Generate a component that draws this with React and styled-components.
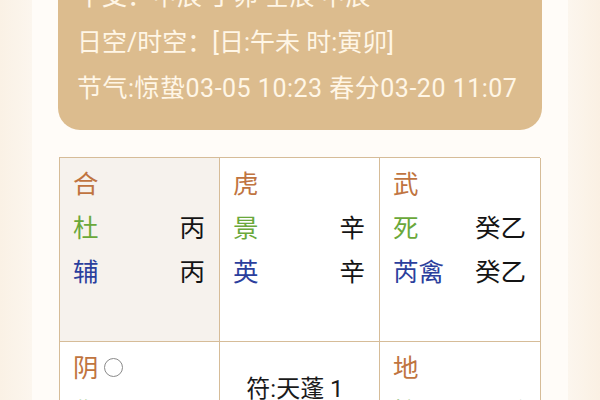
import React from 'react'
import styled, { createGlobalStyle } from 'styled-components'

const GlobalStyle = createGlobalStyle`
  html, body {
    margin: 0;
    padding: 0;
    background: #fbf3e9;
    font-family: Roboto, "Noto Sans CJK SC", sans-serif;
    overflow: hidden;
  }
`

const Page = styled.div`
  width: 600px;
  height: 400px;
  display: flex;
  justify-content: center;
  background: linear-gradient(90deg, #faf1e5 0%, #fcf6ee 32px, #fcf6ee 568px, #faf0e3 100%);
`

const Column = styled.div`
  width: 536px;
  height: 400px;
  overflow: hidden;
  background: #fffcf8;
  display: flex;
  flex-direction: column;
  gap: 27px;
`

const InfoCard = styled.div`
  margin: -40px 26px 0 26px;
  padding: 14px 19px 18px 19px;
  background: #dcbc8e;
  border-radius: 0 0 22px 22px;
  color: #fff6e6;
  font-size: 25px;
  line-height: 46px;
  flex-shrink: 0;
`

const InfoLine = styled.div`
  white-space: nowrap;
  letter-spacing: ${(p) => (p.$wide ? '0.5px' : '0')};
`

const Board = styled.div`
  margin: 0 28px 0 27px;
  display: grid;
  grid-template-columns: 160px 160px 161px;
  grid-auto-rows: 184px;
  border-top: 1px solid #d6bc98;
  border-left: 1px solid #d6bc98;
  font-family: "Noto Sans CJK SC", sans-serif;
  font-size: 25.5px;
  flex-shrink: 0;
`

const Cell = styled.div`
  border-right: 1px solid #d6bc98;
  border-bottom: 1px solid #d6bc98;
  background: ${(p) => (p.$shade ? '#f6f2ed' : '#ffffff')};
  padding: 2px 14px 0 13px;
  display: flex;
  flex-direction: column;
`

const Line = styled.div`
  height: 44px;
  line-height: 44px;
  display: flex;
  align-items: center;
  justify-content: space-between;
`

const Tag = styled.span`
  color: ${(p) => p.$color};
  display: inline-flex;
  align-items: center;
`

const Stem = styled.span`
  color: #141414;
`

const Ring = styled.span`
  display: inline-block;
  width: 19px;
  height: 19px;
  margin-left: 5px;
  margin-top: 2px;
  border: 1.5px solid #8a8a8a;
  border-radius: 50%;
  box-sizing: border-box;
`

const CenterText = styled.div`
  margin-top: 23px;
  padding-right: 8px;
  line-height: 44px;
  text-align: center;
  color: #1a1a1a;
  font-family: Roboto, "Noto Sans CJK SC", sans-serif;
  font-size: 24px;
`

const GOD = '#c07440'
const DOOR = '#6aa83a'
const STAR = '#2b3f9d'

const cells = [
  { shade: true, god: '合', rows: [['杜', '丙', DOOR], ['辅', '丙', STAR]] },
  { god: '虎', rows: [['景', '辛', DOOR], ['英', '辛', STAR]] },
  { god: '武', rows: [['死', '癸乙', DOOR], ['芮禽', '癸乙', STAR]] },
  { god: '阴', ring: true, rows: [['伤', '丁', DOOR], ['冲', '丁', STAR]] },
  { center: '符:天蓬 1' },
  { god: '地', rows: [['惊', '壬', DOOR], ['柱', '壬', STAR]] },
]

export default function App() {
  return (
    <>
      <GlobalStyle />
      <Page>
        <Column>
          <InfoCard>
            <InfoLine>干支：甲辰 丁卯 壬辰 甲辰</InfoLine>
            <InfoLine>日空/时空：[日:午未 时:寅卯]</InfoLine>
            <InfoLine $wide>节气:惊蛰03-05 10:23 春分03-20 11:07</InfoLine>
          </InfoCard>
          <Board>
            {cells.map((c, i) => (
              <Cell key={i} $shade={c.shade}>
                {c.center ? (
                  <CenterText>{c.center}</CenterText>
                ) : (
                  <>
                    <Line>
                      <Tag $color={GOD}>
                        {c.god}
                        {c.ring && <Ring />}
                      </Tag>
                    </Line>
                    {c.rows.map((r, j) => (
                      <Line key={j}>
                        <Tag $color={r[2]}>{r[0]}</Tag>
                        <Stem>{r[1]}</Stem>
                      </Line>
                    ))}
                  </>
                )}
              </Cell>
            ))}
          </Board>
        </Column>
      </Page>
    </>
  )
}
